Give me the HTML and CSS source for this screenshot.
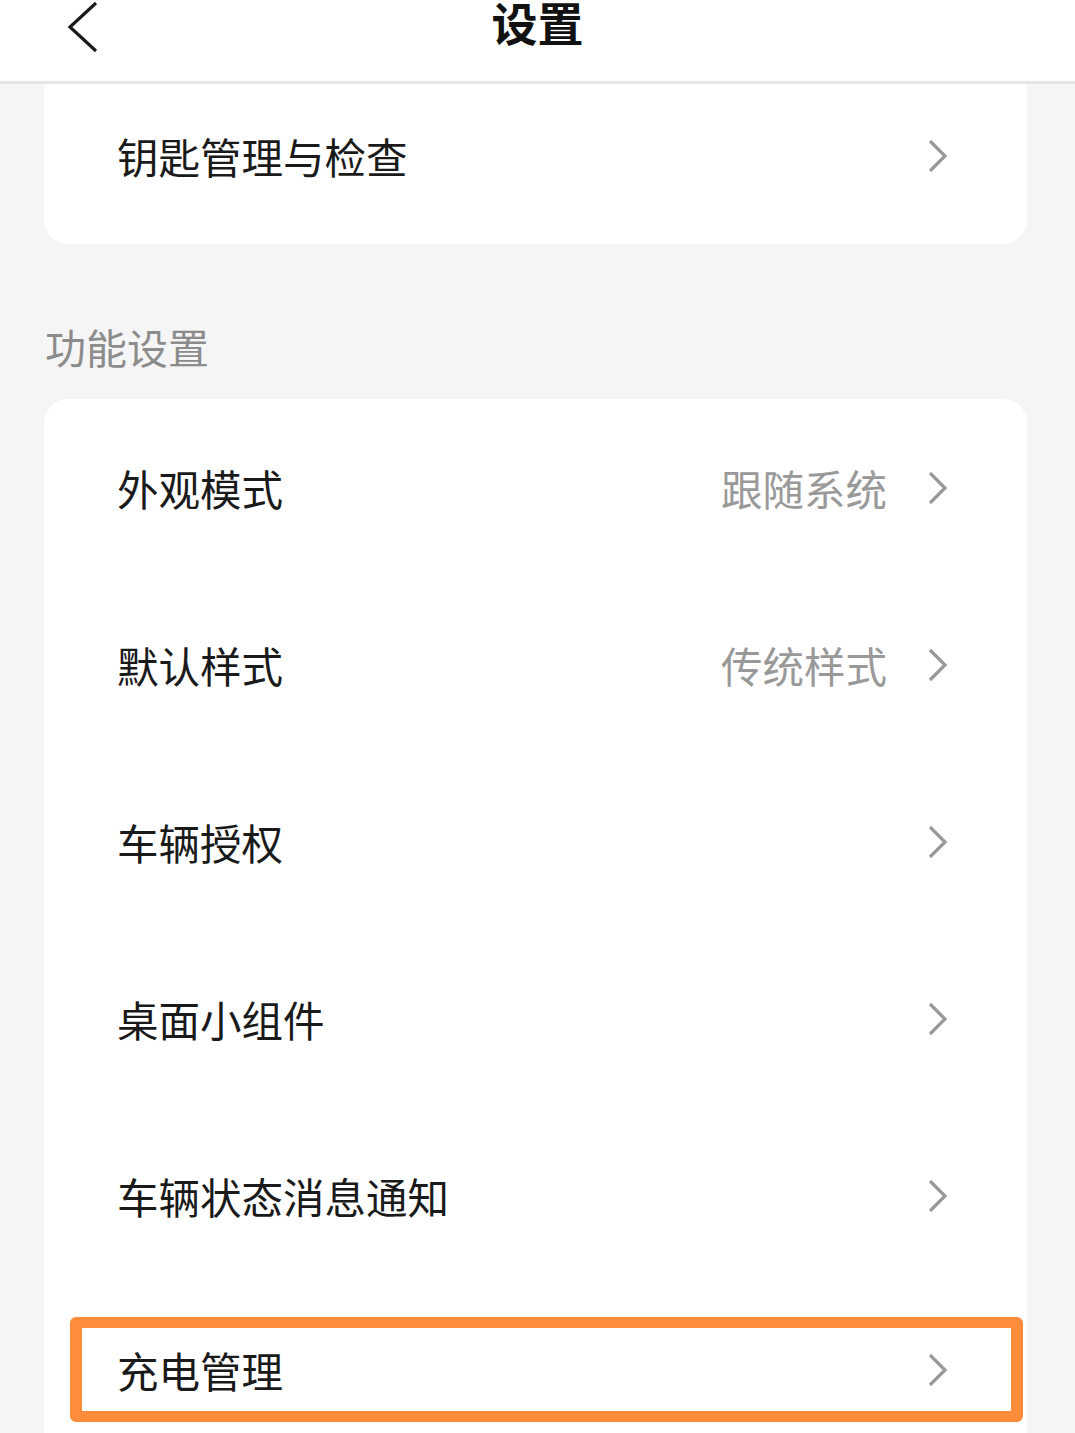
FILE: index.html
```html
<!DOCTYPE html>
<html>
<head>
    <title>设置</title>
    <link rel="stylesheet" href="styles.css">
</head>
<body>
    <div class="header">
        <svg class="back" width="34" height="52" viewBox="0 0 34 52">
            <path d="M30 2 L4 26 L30 50" fill="none" stroke="#1a1a1a" stroke-width="3.2"/>
        </svg>
        <div class="title">设置</div>
    </div>

    <div class="card card_top">
        <div class="row">
            <span class="label">钥匙管理与检查</span>
            <svg class="arrow" width="22" height="34" viewBox="0 0 22 34"><path d="M3 2 L18 17 L3 32" fill="none" stroke="#999" stroke-width="3.2"/></svg>
        </div>
    </div>

    <div class="section">功能设置</div>

    <div class="card">
        <div class="row">
            <span class="label">外观模式</span>
            <span class="value">跟随系统</span>
            <svg class="arrow" width="22" height="34" viewBox="0 0 22 34"><path d="M3 2 L18 17 L3 32" fill="none" stroke="#999" stroke-width="3.2"/></svg>
        </div>
        <div class="row">
            <span class="label">默认样式</span>
            <span class="value">传统样式</span>
            <svg class="arrow" width="22" height="34" viewBox="0 0 22 34"><path d="M3 2 L18 17 L3 32" fill="none" stroke="#999" stroke-width="3.2"/></svg>
        </div>
        <div class="row">
            <span class="label">车辆授权</span>
            <svg class="arrow" width="22" height="34" viewBox="0 0 22 34"><path d="M3 2 L18 17 L3 32" fill="none" stroke="#999" stroke-width="3.2"/></svg>
        </div>
        <div class="row">
            <span class="label">桌面小组件</span>
            <svg class="arrow" width="22" height="34" viewBox="0 0 22 34"><path d="M3 2 L18 17 L3 32" fill="none" stroke="#999" stroke-width="3.2"/></svg>
        </div>
        <div class="row">
            <span class="label">车辆状态消息通知</span>
            <svg class="arrow" width="22" height="34" viewBox="0 0 22 34"><path d="M3 2 L18 17 L3 32" fill="none" stroke="#999" stroke-width="3.2"/></svg>
        </div>
        <div class="row row_mark">
            <div class="mark">
                <span class="label">充电管理</span>
                <svg class="arrow" width="22" height="34" viewBox="0 0 22 34"><path d="M3 2 L18 17 L3 32" fill="none" stroke="#999" stroke-width="3.2"/></svg>
            </div>
        </div>
    </div>
</body>
</html>
```

FILE: styles.css
```css
body {
    font-family: "Noto Sans CJK SC", "Noto Sans", sans-serif;
    background-color: #f5f5f5;
    margin: 0;
    padding: 0;
    height: 1433px;
    overflow: hidden;
}

.header {
    position: relative;
    z-index: 1;
    height: 81px;
    background-color: #fff;
    border-bottom: 3px solid #e6e6e6;
    display: flex;
    justify-content: center;
}

.back {
    position: absolute;
    left: 66px;
    top: 1px;
}

.title {
    font-size: 46px;
    font-weight: bold;
    color: #111;
    line-height: 48px;
    margin-top: -3px;
}

.card {
    background-color: #fff;
    margin: 0 48px 0 44px;
    border-radius: 24px;
}

.card_top {
    margin-top: -17px;
}

.row {
    height: 177px;
    display: flex;
    align-items: center;
    padding: 0 78px 0 73px;
}

.label {
    flex: 1;
    font-size: 41.5px;
    color: #1a1a1a;
}

.value {
    font-size: 41.5px;
    color: #999;
    margin-right: 40px;
}

.arrow {
    display: block;
}

.section {
    font-size: 41px;
    color: #8c8c8c;
    padding: 73px 0 0 45px;
    height: 82px;
    line-height: 58px;
}

.row_mark {
    padding: 0 4px 0 26px;
    align-items: flex-start;
}

.mark {
    flex: 1;
    margin-top: 33px;
    height: 83px;
    border: 11px solid #ff8c3a;
    border-left-width: 12px;
    border-right-width: 12px;
    border-radius: 6px;
    display: flex;
    align-items: center;
    padding: 0 62px 0 35px;
}
```
